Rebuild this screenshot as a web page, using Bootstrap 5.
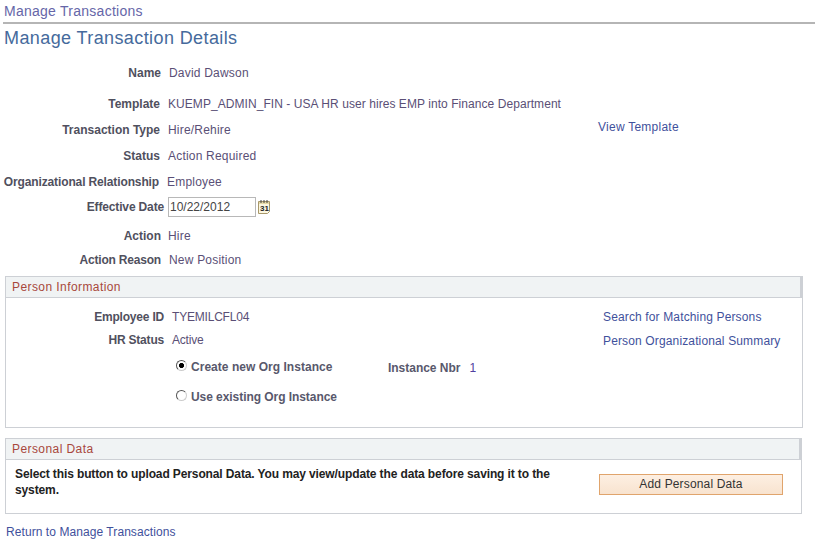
<!DOCTYPE html>
<html lang="en"><head><meta charset="utf-8"><title>Manage Transaction Details</title>
<link href="https://cdn.jsdelivr.net/npm/bootstrap@5.3.0/dist/css/bootstrap.min.css" rel="stylesheet">
<style>
body{font-family:"Liberation Sans",Arial,sans-serif;font-size:12px;color:#51466e;background:#fff;line-height:14px;height:547px;overflow:hidden}
.crumb{color:#6666a8;font-size:14px;letter-spacing:.26px;height:24px;padding:3px 0 0 1px;line-height:16px;border-bottom:2px solid #b5b5b5;margin-left:3px}
.pg-title{color:#456a9c;font-size:18px;font-weight:400;letter-spacing:.4px;line-height:22px;margin:3px 0 0 4px;height:22px}
.frow{display:flex;align-items:center;height:26px}
.frow-date{height:24px}
.frow-first{margin-top:11px}
.frow-tpl{margin-top:5px}
.frow-reason{height:22px}
.frow-p{height:23px}
.frow-r{height:30px}
.flabel{width:160px;flex:none;text-align:right;font-weight:700;color:#50505e}
.w158{width:158px}
.w159{width:159px;letter-spacing:-.13px}
.w161{width:161px}
.w164{width:164px;letter-spacing:-.15px}
.narrow{letter-spacing:-.2px}
.fval{margin-left:8px;color:#5a4f76;letter-spacing:.2px;flex:1}
.mg7{margin-left:7px}
.tight{letter-spacing:.06px}
.tighter{letter-spacing:-.2px}
.lnk{color:#3f519c;text-decoration:none;letter-spacing:.14px}
.lnk-wide{letter-spacing:.25px}
.lnk-sm{letter-spacing:.07px}
.lcol-a{width:217px;flex:none;margin-bottom:6px}
.lcol-b{width:199px;flex:none}
.lcol-low{margin-top:2px}
.date-in{width:88px;height:20px;border:1px solid #b8b8b8;margin-left:4px;padding:0 1px;font:12px/14px "Liberation Sans",sans-serif;color:#444;outline:0}
.cal{margin-left:2px;flex:none}
.pnl{margin:0 12px 0 5px;border:1px solid #cdd0d5}
.pnl-a{margin-top:5px}
.pnl-b{margin-top:10px;margin-right:13px}
.pnl-head{background:#f0f3f4;color:#a8483c;height:21px;padding-left:6px;line-height:21px;letter-spacing:.42px;border-bottom:1px solid #cdd0d5;border-right:2px solid #cdd0d5}
.pnl-body-a{padding:7px 0 16px}
.radio-dot{width:11px;height:11px;border-radius:50%;border:1px solid;border-color:#555 #ccc #ccc #555;flex:none;background:#fff;margin:0 4px 1px 170px}
.radio-dot.on{background:radial-gradient(circle,#000 2.2px,#fff 2.9px)}
.rlabel{font-weight:700;color:#58586c;letter-spacing:-.06px;width:197px;margin-top:2px}
.rlabel-wide{letter-spacing:.03px}
.inst{font-weight:700;color:#58586c;margin:3px 9px 0 0;letter-spacing:-.02px}
.inst-v{margin-top:3px;color:#5040a0}
.pnl-body-b{display:flex;padding:6px 18px 0 9px;height:53px;line-height:16px}
.pd-text{font-weight:700;color:#222;width:540px;letter-spacing:-.12px}
.add-btn{width:184px;height:21px;margin:8px 0 0 auto;background:linear-gradient(#fdefe2,#f8e3cf);border:1px solid #e0a46c;border-radius:0;color:#333;font-size:12px;letter-spacing:.15px;padding:0 0 2px;line-height:14px;flex:none}
.back{display:block;margin:11px 0 0 6px}
</style></head><body>
<div class="crumb">Manage Transactions</div>
<h1 class="pg-title">Manage Transaction Details</h1>
<div class="frow frow-first"><div class="flabel w161">Name</div><div class="fval">David Dawson</div></div>
<div class="frow frow-tpl"><div class="flabel">Template</div><div class="fval tight">KUEMP_ADMIN_FIN - USA HR user hires EMP into Finance Department</div></div>
<div class="frow"><div class="flabel">Transaction Type</div><div class="fval">Hire/Rehire</div><div class="lcol-a"><a class="lnk lnk-wide" href="#">View Template</a></div></div>
<div class="frow"><div class="flabel">Status</div><div class="fval">Action Required</div></div>
<div class="frow"><div class="flabel w159">Organizational Relationship</div><div class="fval">Employee</div></div>
<div class="frow frow-date"><div class="flabel w164">Effective Date</div><input class="date-in" value="10/22/2012" aria-label="Effective Date">
<svg class="cal" width="13" height="16" viewBox="0 0 13 16"><path d="M.5 2.5h11v10l-2 2h-9z" fill="#fbf6e0" stroke="#a8986a"/><path d="M1 3h10v2H1z" fill="#e6d9a8"/><path d="M3 1v3M6 1v3M9 1v3" stroke="#444"/><text x="2" y="12" font-family="Liberation Sans" font-size="8" font-weight="700" fill="#222">31</text></svg></div>
<div class="frow mt-1"><div class="flabel w161">Action</div><div class="fval mg7">Hire</div></div>
<div class="frow frow-reason"><div class="flabel w161 narrow">Action Reason</div><div class="fval">New Position</div></div>
<div class="pnl pnl-a">
 <div class="pnl-head">Person Information</div>
 <div class="pnl-body-a">
  <div class="frow frow-p"><div class="flabel w158 narrow">Employee ID</div><div class="fval tighter">TYEMILCFL04</div><div class="lcol-b"><a class="lnk" href="#">Search for Matching Persons</a></div></div>
  <div class="frow frow-p"><div class="flabel w158 narrow">HR Status</div><div class="fval tighter">Active</div><div class="lcol-b lcol-low"><a class="lnk" href="#">Person Organizational Summary</a></div></div>
  <div class="frow frow-r"><span class="radio-dot on"></span><span class="rlabel rlabel-wide">Create new Org Instance</span><span class="inst">Instance Nbr</span><span class="inst-v">1</span></div>
  <div class="frow frow-r"><span class="radio-dot"></span><span class="rlabel">Use existing Org Instance</span></div>
 </div>
</div>
<div class="pnl pnl-b">
 <div class="pnl-head">Personal Data</div>
 <div class="pnl-body-b"><div class="pd-text">Select this button to upload Personal Data. You may view/update the data before saving it to the system.</div><button class="add-btn btn">Add Personal Data</button></div>
</div>
<a class="lnk lnk-sm back" href="#">Return to Manage Transactions</a>
</body></html>
